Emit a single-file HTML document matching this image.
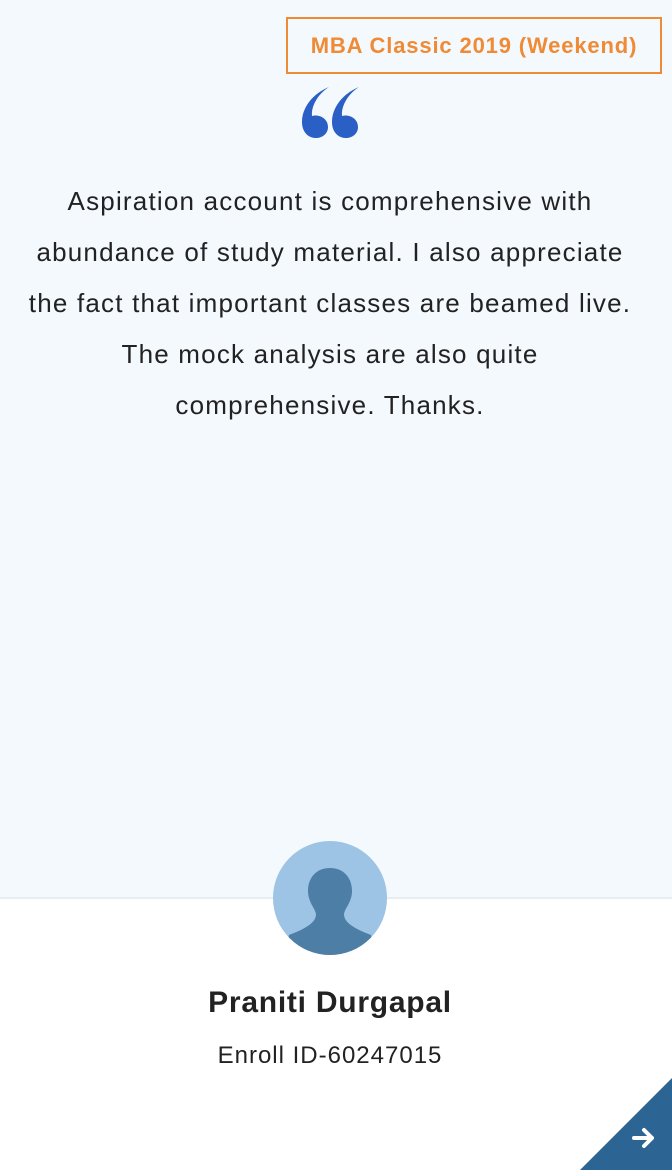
<!DOCTYPE html>
<html><head><style>
body{margin:0;width:672px;height:1170px;position:relative;overflow:hidden;background:#fff;font-family:"Liberation Sans",sans-serif}
.top{position:absolute;left:0;top:0;width:672px;height:897px;background:#f4f9fd;border-bottom:2px solid #e8edf1}
.badge{position:absolute;left:286px;top:17px;width:372px;height:53px;border:2px solid #ef8a35;color:#ef8a35;font-weight:bold;font-size:22px;letter-spacing:0.85px;text-align:center;line-height:53px}
.q{position:absolute;left:300px;top:84px}
.txt{position:absolute;left:0;top:176px;width:660px;text-align:center;font-size:26px;letter-spacing:1.2px;line-height:51px;color:#222}
.name{position:absolute;left:0;width:660px;top:986px;text-align:center;font-weight:bold;font-size:30px;letter-spacing:0.75px;color:#222}
.id{position:absolute;left:0;width:660px;top:1042px;text-align:center;font-size:24px;letter-spacing:1px;color:#222}
</style></head><body>
<div class="top"></div>
<div class="badge">MBA Classic 2019 (Weekend)</div>
<svg class="q" width="64" height="58" viewBox="0 0 64 58">
<path fill="#2a5fc6" d="M29 3C18 10 11 22 12 32C20 30 28 35 28 43C28 50 22 54 16 54C8 54 2 48 2 38C2 24 12 10 29 3Z"/>
<path fill="#2a5fc6" d="M59 3C48 10 41 22 42 32C50 30 58 35 58 43C58 50 52 54 46 54C38 54 32 48 32 38C32 24 42 10 59 3Z"/>
</svg>
<div class="txt">Aspiration account is comprehensive with<br>abundance of study material. I also appreciate<br>the fact that important classes are beamed live.<br>The mock analysis are also quite<br>comprehensive. Thanks.</div>
<svg style="position:absolute;left:273px;top:841px" width="114" height="114" viewBox="0 0 114 114">
<defs><clipPath id="c"><circle cx="57" cy="57" r="57"/></clipPath></defs>
<circle cx="57" cy="57" r="57" fill="#9dc4e4"/>
<g clip-path="url(#c)" fill="#4d7ea6">
<path d="M57 27C44 27 35 36 35 50C35 61 42 67 43 73C43 80 37 86 16 94L10 120L104 120L98 94C77 86 71 80 71 73C72 67 79 61 79 50C79 36 70 27 57 27Z"/>
</g></svg>
<div class="name">Praniti Durgapal</div>
<div class="id">Enroll ID-60247015</div>
<svg style="position:absolute;left:580px;top:1078px" width="92" height="92" viewBox="0 0 92 92">
<path d="M0 92L92 0L92 92Z" fill="#2c6593"/>
<path d="M54 60H72M64 52L72 60L64 68" stroke="#fff" stroke-width="4" fill="none" stroke-linecap="round" stroke-linejoin="round"/>
</svg>
</body></html>
